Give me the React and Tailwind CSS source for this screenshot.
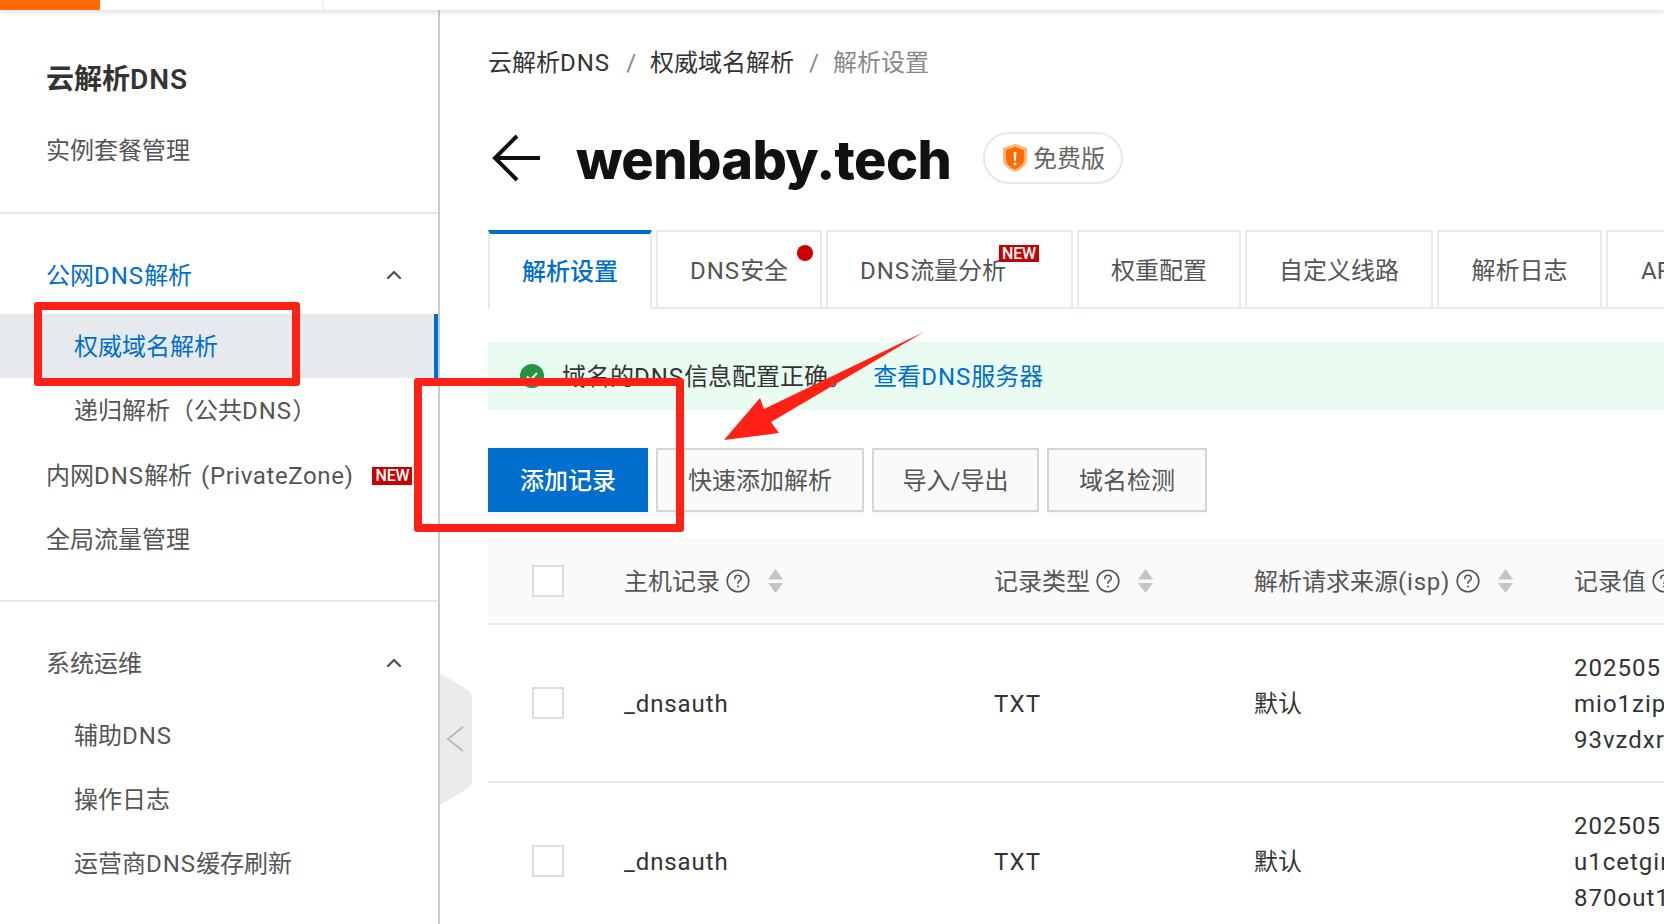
import { ChevronUp } from 'lucide-react'

const Dns = () => <span className="tracking-[1px]">DNS</span>

const tabs = [
  { label: '解析设置', className: 'w-[164px] justify-center' },
  { label: <><Dns />安全</>, className: 'w-[166px] pl-[32px]', dot: true },
  { label: <><Dns />流量分析</>, className: 'w-[247px] pl-[32px]', isNew: true },
  { label: '权重配置', className: 'w-[164px] justify-center' },
  { label: '自定义线路', className: 'w-[188px] justify-center' },
  { label: '解析日志', className: 'w-[165px] justify-center' },
  { label: 'API', className: 'w-[120px] pl-[33px]' },
]

const rows = [
  { host: '_dnsauth', type: 'TXT', isp: '默认', value: ['202505', 'mio1zip', '93vzdxr'] },
  { host: '_dnsauth', type: 'TXT', isp: '默认', value: ['202505', 'u1cetgir', '870out1'] },
]

function NewBadge({ className }) {
  return (
    <span className={`flex items-center justify-center bg-[#c80000] text-[16px] leading-none font-medium tracking-[-0.2px] text-white ${className}`}>
      NEW
    </span>
  )
}

function NavRow({ children, sub, active, blue, arrow }) {
  return (
    <div
      className={`relative flex h-[64px] items-center justify-between text-[24px] ${sub ? 'pl-[74px]' : 'pl-[46px]'} ${active ? 'bg-[#e6eaef]' : ''} ${blue ? 'text-[#006ecc]' : 'text-[#555555]'}`}
    >
      <span className="pt-[2px] whitespace-nowrap">{children}</span>
      {arrow && <ChevronUp className="mr-[32px] h-[24px] w-[24px] text-[#555555]" strokeWidth={2.4} />}
      {active && <div className="absolute top-0 right-0 bottom-0 w-[4px] bg-[#006ecc]" />}
    </div>
  )
}

function Sidebar() {
  return (
    <aside className="w-[440px] shrink-0 border-r-2 border-[#c8cbd0]">
      <div className="border-b-2 border-[#e5e5e5] pt-[36px] pb-[30px]">
        <div className="flex h-[64px] items-center pt-[4px] pl-[46px] text-[28px] font-semibold text-[#333333]">
          <span>云解析<Dns /></span>
        </div>
        <div className="mt-[8px]">
          <NavRow>实例套餐管理</NavRow>
        </div>
      </div>
      <div className="border-b-2 border-[#e5e5e5] pt-[29px] pb-[29px]">
        <NavRow blue arrow>公网<Dns />解析</NavRow>
        <div className="mt-[7px]">
          <NavRow sub blue active>权威域名解析</NavRow>
          <NavRow sub>递归解析（公共<Dns />）</NavRow>
          <div className="relative flex h-[65px] items-center pl-[46px] text-[24px] whitespace-nowrap text-[#555555]">
            <span className="pt-[2px]">
              内网<Dns />解析 <span className="ml-[3px] tracking-[0.6px]">(PrivateZone)</span>
            </span>
            <NewBadge className="mt-[2px] ml-[19px] h-[18px] w-[40px]" />
          </div>
          <NavRow>全局流量管理</NavRow>
        </div>
      </div>
      <div className="pt-[29px]">
        <NavRow arrow>系统运维</NavRow>
        <div className="mt-[8px]">
          <NavRow sub>辅助<Dns /></NavRow>
          <NavRow sub>操作日志</NavRow>
          <NavRow sub>运营商<Dns />缓存刷新</NavRow>
        </div>
      </div>
    </aside>
  )
}

function HelpIcon() {
  return (
    <svg viewBox="0 0 24 24" className="h-[24px] w-[24px] shrink-0" fill="none" stroke="#555555" strokeWidth="1.6">
      <circle cx="12" cy="12" r="10.8" />
      <path d="M8.800 9.400a3.200 3.200 0 0 1 6.400 0c0 2.200-3.200 2.400-3.200 4.800" strokeLinecap="round" />
      <circle cx="12" cy="17.400" r="1" fill="#555555" stroke="none" />
    </svg>
  )
}

function SortIcon() {
  return (
    <svg viewBox="0 0 15 24" className="h-[24px] w-[15px] shrink-0" fill="#c5c5c5">
      <path d="M7.500 0 15 10.500H0z" />
      <path d="M7.500 24 0 14h15z" />
    </svg>
  )
}

function Checkbox() {
  return <div className="h-[32px] w-[32px] border-2 border-[#dddddd] bg-white" />
}

function HeaderCell({ children, sort = true }) {
  return (
    <div className="flex items-center whitespace-nowrap">
      <span className="pt-[2px]">{children}</span>
      <span className="ml-[6px]"><HelpIcon /></span>
      {sort && <span className="ml-[18px]"><SortIcon /></span>}
    </div>
  )
}

function Table() {
  return (
    <div className="mt-[26px] text-[24px]">
      <div className="grid h-[87px] grid-cols-[136px_370px_260px_320px_1fr] items-center border-b-2 border-[#e6ebf0] bg-[#fafafa] text-[#555555]">
        <div className="pl-[44px]"><Checkbox /></div>
        <HeaderCell>主机记录</HeaderCell>
        <HeaderCell>记录类型</HeaderCell>
        <HeaderCell>解析请求来源<span className="tracking-[0.8px]">(isp)</span></HeaderCell>
        <HeaderCell sort={false}>记录值</HeaderCell>
      </div>
      {rows.map((row, i) => (
        <div
          key={i}
          className="grid h-[158px] grid-cols-[136px_370px_260px_320px_1fr] items-center border-b-2 border-[#e6ebf0] text-[#333333]"
        >
          <div className="pl-[44px]"><Checkbox /></div>
          <div className="pt-[2px] tracking-[0.9px]">{row.host}</div>
          <div className="pt-[2px] tracking-[1.2px]">{row.type}</div>
          <div className="pt-[2px]">{row.isp}</div>
          <div className="pt-[2px] leading-[36px] tracking-[1px] whitespace-nowrap">
            {row.value.map((line) => (
              <div key={line}>{line}</div>
            ))}
          </div>
        </div>
      ))}
    </div>
  )
}

export default function App() {
  return (
    <div className="relative flex h-[924px] w-[1664px] flex-col overflow-hidden bg-white [font-family:Roboto,'Noto_Sans_CJK_SC',sans-serif]">
      <div className="relative z-10 flex h-[10px] shrink-0 bg-white shadow-[0_1px_6px_rgba(0,0,0,0.18)]">
        <div className="w-[100px] bg-[#ff6a00]" />
        <div className="w-[224px] border-r-2 border-[#eeeeee]" />
      </div>

      <div className="flex min-h-0 flex-1">
        <Sidebar />

        <main className="min-w-0 flex-1 overflow-hidden pl-[48px]">
          <div className="mt-[33px] flex h-[40px] items-center text-[24px] whitespace-nowrap text-[#333333]">
            <span>云解析<Dns /></span>
            <span className="mr-[14px] ml-[16px] text-[#888888]">/</span>
            <span>权威域名解析</span>
            <span className="mr-[14px] ml-[15px] text-[#888888]">/</span>
            <span className="text-[#888888]">解析设置</span>
          </div>

          <div className="mt-[49px] flex h-[52px] items-center">
            <svg viewBox="0 0 50 48" className="ml-[3px] h-[48px] w-[50px] shrink-0" fill="none" stroke="#111111" strokeWidth="4">
              <path d="M49 24H4" />
              <path d="M26 2 4 24l22 22" />
            </svg>
            <h1 className="ml-[35px] w-[407px] shrink-0 pt-[2px] [font-family:Inter,sans-serif] text-[54px] font-extrabold tracking-[-0.6px] whitespace-nowrap text-[#111111]">
              wenbaby.tech
            </h1>
            <div className="flex h-[52px] items-center rounded-full border-2 border-[#e5e8eb] pr-[16px] pl-[18px] text-[24px] text-[#666666]">
              <svg viewBox="0 0 24 28" className="mr-[6px] h-[28px] w-[24px]">
                <path d="M12 0 24 4v11c0 6-5 10-12 13C5 25 0 21 0 15V4z" fill="#ffb27a" />
                <path d="M12 3 21 6v9c0 5-4 8-9 10.500C7 23 3 20 3 15V6z" fill="#ff6a00" />
                <path d="M10.600 8h2.800l-.5 9h-1.800z" fill="#ffffff" />
                <circle cx="12" cy="20" r="1.500" fill="#ffffff" />
              </svg>
              <span className="pt-[2px]">免费版</span>
            </div>
          </div>

          <div className="mt-[46px] flex h-[79px] gap-[4px] border-b-2 border-[#e6ebf0] text-[24px]">
            {tabs.map((tab, i) => (
              <div
                key={i}
                className={
                  i === 0
                    ? `flex h-[79px] shrink-0 items-center border-x-2 border-t-4 border-x-[#e6ebf0] border-t-[#006ecc] bg-white font-medium text-[#006ecc] ${tab.className}`
                    : `relative flex h-[77px] shrink-0 items-center border-x-2 border-t-2 border-[#e6ebf0] pt-[2px] whitespace-nowrap text-[#555555] ${tab.className}`
                }
              >
                {tab.label}
                {tab.dot && <span className="absolute top-[13px] right-[7px] h-[16px] w-[16px] rounded-full bg-[#c80000]" />}
                {tab.isNew && <NewBadge className="absolute top-[13px] right-[32px] h-[17px] w-[40px]" />}
              </div>
            ))}
          </div>

          <div className="mt-[33px] flex h-[68px] items-center bg-[#eafbf1] pl-[32px] text-[24px] whitespace-nowrap text-[#333333]">
            <svg viewBox="0 0 24 24" className="h-[24px] w-[24px] shrink-0">
              <circle cx="12" cy="12" r="12" fill="#22963f" />
              <path d="m7 12.500 3.500 3.500L17 9" fill="none" stroke="#ffffff" strokeWidth="2" />
            </svg>
            <span className="ml-[18px] pt-[2px]">域名的<Dns />信息配置正确。</span>
            <span className="ml-[21px] pt-[2px] text-[#006ecc]">查看<Dns />服务器</span>
          </div>

          <div className="mt-[38px] flex gap-[8px] text-[24px]">
            <button className="h-[64px] w-[160px] bg-[#006ecc] pt-[2px] font-medium text-white shadow-[0_4px_0_#fafafa]">添加记录</button>
            <button className="h-[64px] w-[208px] border-2 border-[#d5d5d5] bg-[#fafafa] pt-[2px] text-[#555555] shadow-[0_4px_0_#fafafa]">快速添加解析</button>
            <button className="h-[64px] w-[167px] border-2 border-[#d5d5d5] bg-[#fafafa] pt-[2px] text-[#555555] shadow-[0_4px_0_#fafafa]">导入/导出</button>
            <button className="h-[64px] w-[160px] border-2 border-[#d5d5d5] bg-[#fafafa] pt-[2px] text-[#555555] shadow-[0_4px_0_#fafafa]">域名检测</button>
          </div>

          <Table />
        </main>
      </div>

      {/* collapse handle on the sidebar edge */}
      <svg viewBox="0 0 32 132" className="absolute top-[673px] left-[440px] h-[132px] w-[32px]">
        <path d="M0 0 28 17q4 3 4 7v84q0 4-4 7L0 132z" fill="#ebebeb" />
        <path d="M23 54 8 66l15 12" fill="none" stroke="#bbbbbb" strokeWidth="2" />
      </svg>

      {/* red annotations drawn over the page */}
      <div className="absolute top-[302px] left-[34px] h-[84px] w-[266px] rounded-[3px] border-8 border-[#ff2016]" />
      <div className="absolute top-[378px] left-[414px] h-[154px] w-[270px] rounded-[3px] border-8 border-[#ff2016]" />
      <svg viewBox="0 0 1664 924" className="pointer-events-none absolute top-0 left-0 h-[924px] w-[1664px]">
        <polygon points="924,332 764,409 760,398 724,440 779,433 771,422" fill="#ff2016" />
      </svg>
    </div>
  )
}
